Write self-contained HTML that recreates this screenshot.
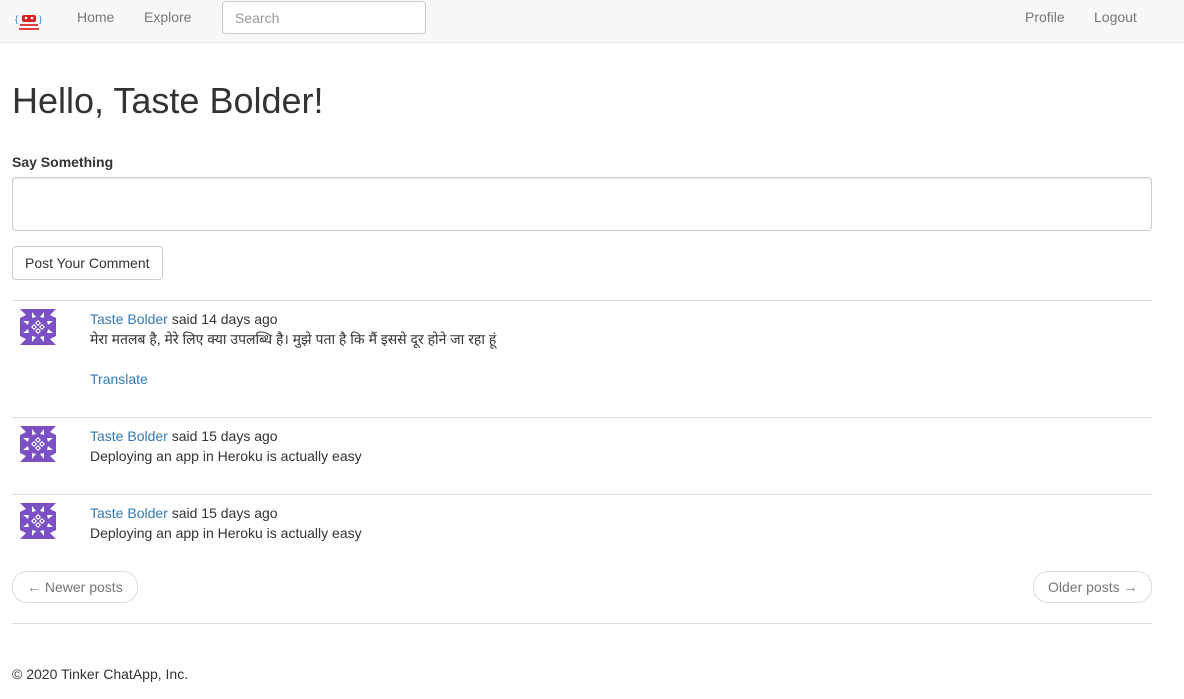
<!DOCTYPE html>
<html><head><meta charset="utf-8"><style>
*{box-sizing:border-box}
body{margin:0;font-family:"Liberation Sans","Noto Sans CJK SC",sans-serif;font-size:14px;color:#333;background:#fff}
.nav{position:absolute;top:0;left:0;width:1184px;height:43px;background:#f8f8f8;border-bottom:1px solid #e7e7e7}
.nav a{position:absolute;top:9px;color:#777;font-size:14px;text-decoration:none}
.search{position:absolute;left:222px;top:1px;width:204px;height:33px;border:1px solid #ccc;border-radius:4px;background:#fff;padding:8px 12px;color:#999}
a{color:#337ab7;text-decoration:none}
h1{position:absolute;left:12px;top:81px;margin:0;font-size:36px;font-weight:500;line-height:1.1}
.lbl{position:absolute;left:12px;top:154px;font-weight:bold}
.ta{position:absolute;left:12px;top:177px;width:1140px;height:54px;border:1px solid #ccc;border-radius:4px;box-shadow:inset 0 1px 1px rgba(0,0,0,.075)}
.btn{position:absolute;left:12px;top:246px;width:151px;height:34px;border:1px solid #ccc;border-radius:4px;padding:9px 12px;font-size:14px;line-height:1}
.hr{position:absolute;left:12px;width:1140px;border-top:1px solid #ddd}
.av{position:absolute;left:20px}
.t{position:absolute;left:90px;line-height:20px}
.pg{position:absolute;top:571px;height:32px;border:1px solid #ddd;border-radius:15px;padding:7px 14px;color:#777;line-height:16px}
</style></head><body>
<div class="nav">
<svg style="position:absolute;left:14px;top:12px" width="30" height="22" viewBox="0 0 30 22"><text x="1" y="10" font-size="9" fill="#3a7bd5" font-family="Liberation Sans">{</text><text x="25" y="10" font-size="9" fill="#3a7bd5" font-family="Liberation Sans">}</text><rect x="8" y="3" width="14" height="7" rx="2" fill="#e02020"/><circle cx="12" cy="6" r="1.3" fill="#fff"/><circle cx="18" cy="6" r="1.3" fill="#fff"/><rect x="6" y="12" width="18" height="2" fill="#e04040"/><rect x="5" y="16" width="20" height="2" fill="#e04040"/></svg>
<a style="left:77px">Home</a><a style="left:144px">Explore</a>
<div class="search">Search</div>
<a style="left:1025px">Profile</a><a style="left:1094px">Logout</a>
</div>
<h1>Hello, Taste Bolder!</h1>
<div class="lbl">Say Something</div>
<div class="ta"></div>
<div class="btn">Post Your Comment</div>

<svg width="0" height="0" style="position:absolute"><defs><g id="av"><rect width="36" height="36" fill="#7a50c4"/><g fill="#fff"><path d="M0 0l6 6-6 3zM36 0l-6 6 6 3zM0 36l6-6-6-3zM36 36l-6-6 6-3z"/><path d="M12 3l4 5-4 1zM24 3l-4 5 4 1zM12 33l4-5-4-1zM24 33l-4-5 4-1z"/><path d="M3 12l5 4 1-4zM33 12l-5 4-1-4zM3 24l5-4 1 4zM33 24l-5-4-1 4z"/><path d="M18 11l3 3-3 3-3-3zM18 19l3 3-3 3-3-3zM14 15l3 3-3 3-3-3zM22 15l3 3-3 3-3-3z"/></g><g fill="#7a50c4"><rect x="17" y="13" width="2" height="2"/><rect x="17" y="21" width="2" height="2"/><rect x="13" y="17" width="2" height="2"/><rect x="21" y="17" width="2" height="2"/></g></g></defs></svg>

<div class="hr" style="top:300px"></div>
<svg class="av" style="top:309px" width="36" height="36"><use href="#av"/></svg>
<div class="t" style="top:309px"><a>Taste Bolder</a> said 14 days ago<br>मेरा मतलब है, मेरे लिए क्या उपलब्धि है। मुझे पता है कि मैं इससे दूर होने जा रहा हूं<br><br><a>Translate</a></div>

<div class="hr" style="top:417px"></div>
<svg class="av" style="top:426px" width="36" height="36"><use href="#av"/></svg>
<div class="t" style="top:426px"><a>Taste Bolder</a> said 15 days ago<br>Deploying an app in Heroku is actually easy</div>

<div class="hr" style="top:494px"></div>
<svg class="av" style="top:503px" width="36" height="36"><use href="#av"/></svg>
<div class="t" style="top:503px"><a>Taste Bolder</a> said 15 days ago<br>Deploying an app in Heroku is actually easy</div>

<div class="pg" style="left:12px">← Newer posts</div>
<div class="pg" style="left:1033px">Older posts →</div>
<div class="hr" style="top:623px"></div>
<div style="position:absolute;left:12px;top:666px">© 2020 Tinker ChatApp, Inc.</div>
</body></html>
